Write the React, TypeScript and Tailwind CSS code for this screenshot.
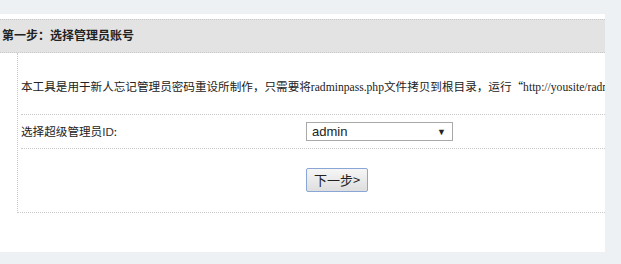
export default function App() {
    const cn = '"SimSun", "Noto Sans CJK SC", "Liberation Serif", serif';

    return (
        <div className="w-[621px] h-[264px] bg-[#edf1f4] overflow-hidden">
            <div className="mt-[14px] w-[605px] h-[238px] bg-white pt-[5px] overflow-hidden">
                {/* step header */}
                <div className="h-[34px] border-y border-dotted border-[#c8c8c8] bg-[#e3e3e3] flex items-center pl-[2px] pb-[3px]">
                    <span className="text-[12px] font-bold text-[#222]" style={{ fontFamily: cn }}>
                        第一步：选择管理员账号
                    </span>
                </div>

                <div className="ml-[17px] h-[160px] border-l border-b border-dotted border-[#c8c8c8] flex flex-col">
                    <div className="h-[62px] ml-[3px] border-b border-dotted border-[#c8c8c8] flex items-center pt-[8px] whitespace-nowrap overflow-hidden">
                        <span className="text-[11.6px] text-[#222]" style={{ fontFamily: cn }}>
                            本工具是用于新人忘记管理员密码重设所制作，只需要将<span className="font-['Liberation_Serif']">radminpass.php</span>文件拷贝到根目录，运行“<span className="font-['Liberation_Serif']">http://yousite/radminpass.php</span>”
                        </span>
                    </div>

                    <div className="h-[34px] ml-[3px] border-b border-dotted border-[#c8c8c8] flex items-center">
                        <span className="w-[285px] text-[11.6px] text-[#222]" style={{ fontFamily: cn }}>
                            选择超级管理员<span className="font-['Liberation_Sans'] text-[#333]">ID</span>:
                        </span>
                        <div className="w-[147px] h-[19px] border border-[#a9a9a9] bg-white flex items-center justify-between pl-[5px] pr-[6px]">
                            <span className="text-[13px] text-[#222] font-['Liberation_Sans'] leading-none">admin</span>
                            <span className="text-[9px] text-[#222] leading-none">▼</span>
                        </div>
                    </div>

                    <div className="flex-1 flex items-center pl-[288px] pb-[2px]">
                        <button className="w-[62px] h-[24px] border border-[#8aa6d6] rounded-[2px] bg-gradient-to-b from-[#f6f6f6] to-[#dedede] text-[13px] text-[#222] flex items-center justify-center" style={{ fontFamily: '"Noto Sans CJK SC", sans-serif' }}>
                            下一步&gt;
                        </button>
                    </div>
                </div>
            </div>
        </div>
    );
}
